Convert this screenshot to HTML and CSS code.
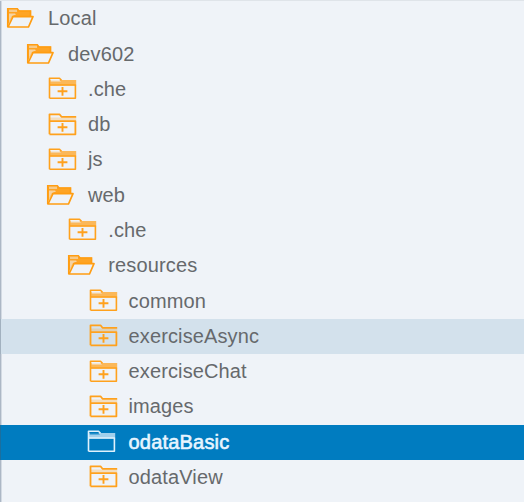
FILE: index.html
```html
<!DOCTYPE html>
<html lang="en">
<head>
<meta charset="utf-8">
<title>Files</title>
<link rel="stylesheet" href="styles.css">
</head>
<body>
<svg class="symbols" aria-hidden="true">
  <symbol id="open" viewBox="0 0 30 26">
    <path d="M2 4H12L14 4.5H25V11H6L2 18Z" fill="currentColor" opacity=".92"/>
    <path class="cut" d="M3 4.3H11V5.7H3Z" opacity=".7"/>
    <path class="cut" d="M3 7.5H9L10 8.5L6 10L3 16Z" opacity=".6"/>
    <path d="M1.8 21V2.8H11.3L13 5H24.5V10" fill="none" stroke="currentColor" stroke-width="1.7"/>
    <path class="cut" d="M7 11H26L22 20.5H3Z"/>
    <path d="M7 10.7H27L22.5 21H2Z" fill="none" stroke="currentColor" stroke-width="1.7" stroke-linejoin="round"/>
  </symbol>
  <symbol id="band" viewBox="0 0 30 26">
    <path d="M2 4H12L14 4H28.2V9.5H2Z" fill="currentColor" opacity=".72"/>
    <path class="cut" d="M2.5 3.8H11L13 5.5H2.5Z" opacity=".8"/>
    <path d="M1.5 22.3V2.3H11.5L13.5 4.3M1.5 9H27.4V22.3H1.5" fill="none" stroke="currentColor" stroke-width="1.6" stroke-linejoin="round"/>
  </symbol>
  <symbol id="line" viewBox="0 0 30 26">
    <path d="M1.5 22.3V2.3H11.5L13.5 4.8H28.2M1.5 9.2H27.4V22.3H1.5" fill="none" stroke="currentColor" stroke-width="1.8" stroke-linejoin="round"/>
    <path d="M2 7H28.2" stroke="currentColor" stroke-width="3" opacity=".25"/>
  </symbol>
  <symbol id="plus" viewBox="0 0 30 26">
    <path d="M9.6 15.3H19.4M14.5 10.9V19.7" fill="none" stroke="currentColor" stroke-width="1.9"/>
  </symbol>
</svg>
<ul class="tree">
  <li class="row depth0 expanded"><svg><use href="#open"/></svg><span>Local</span></li>
  <li class="row depth1 expanded"><svg><use href="#open"/></svg><span>dev602</span></li>
  <li class="row depth2"><svg><use href="#band"/><use href="#plus"/></svg><span>.che</span></li>
  <li class="row depth2"><svg><use href="#line"/><use href="#plus"/></svg><span>db</span></li>
  <li class="row depth2"><svg><use href="#band"/><use href="#plus"/></svg><span>js</span></li>
  <li class="row depth2 expanded"><svg><use href="#open"/></svg><span>web</span></li>
  <li class="row depth3"><svg><use href="#band"/><use href="#plus"/></svg><span>.che</span></li>
  <li class="row depth3 expanded"><svg><use href="#open"/></svg><span>resources</span></li>
  <li class="row depth4"><svg><use href="#band"/><use href="#plus"/></svg><span>common</span></li>
  <li class="row depth4 hovered"><svg><use href="#line"/><use href="#plus"/></svg><span>exerciseAsync</span></li>
  <li class="row depth4"><svg><use href="#band"/><use href="#plus"/></svg><span>exerciseChat</span></li>
  <li class="row depth4"><svg><use href="#line"/><use href="#plus"/></svg><span>images</span></li>
  <li class="row depth4 selected"><svg><use href="#band"/></svg><span>odataBasic</span></li>
  <li class="row depth4"><svg><use href="#line"/><use href="#plus"/></svg><span>odataView</span></li>
</ul>
</body>
</html>
```
FILE: styles.css
```css
* { box-sizing: border-box; }

body {
  --row-bg: #eff3f8;
  margin: 0;
  height: 502px;
  overflow: hidden;
  background: var(--row-bg);
  border-top: 1px solid #dfe4e9;
  box-shadow: inset 1px 0 #acb7c5, inset 2px 0 #d3dae3;
  font: 20px/35px "Liberation Sans", Arial, sans-serif;
  color: #66696c;
}

.symbols { position: absolute; width: 0; height: 0; }
.cut { fill: var(--row-bg); }

.tree { list-style: none; margin: 0; padding: 0.4px 0 0; }

.row {
  display: grid;
  grid-template-columns: 40px 1fr;
  align-items: center;
  height: 35.27px;
}
.row svg {
  width: 30px;
  height: 26px;
  margin: 0 0 1px;
  color: #ffa11c;
}
.row span { letter-spacing: 0.13px; white-space: nowrap; padding-bottom: 1px; }
.row.expanded svg { margin-left: -1.6px; margin-bottom: 0; color: #ff9d12; }

.depth0 { padding-left: 8px; }
.depth1 { padding-left: 28px; }
.depth2 { padding-left: 48px; }
.depth3 { padding-left: 68.3px; }
.depth4 { padding-left: 88.5px; }

.hovered {
  --row-bg: #d3e1ec;
  background: var(--row-bg);
  box-shadow: inset 1px 0 #a2b1bf;
}

.selected {
  --row-bg: #007cc0;
  background: var(--row-bg);
  box-shadow: inset 1px 0 #1b6f9f;
  color: #e8f5ff;
}
.row.selected svg { margin-left: -1.5px; color: #e0f1fc; }
.selected span { -webkit-text-stroke: 0.6px; letter-spacing: 0.2px; }
```
